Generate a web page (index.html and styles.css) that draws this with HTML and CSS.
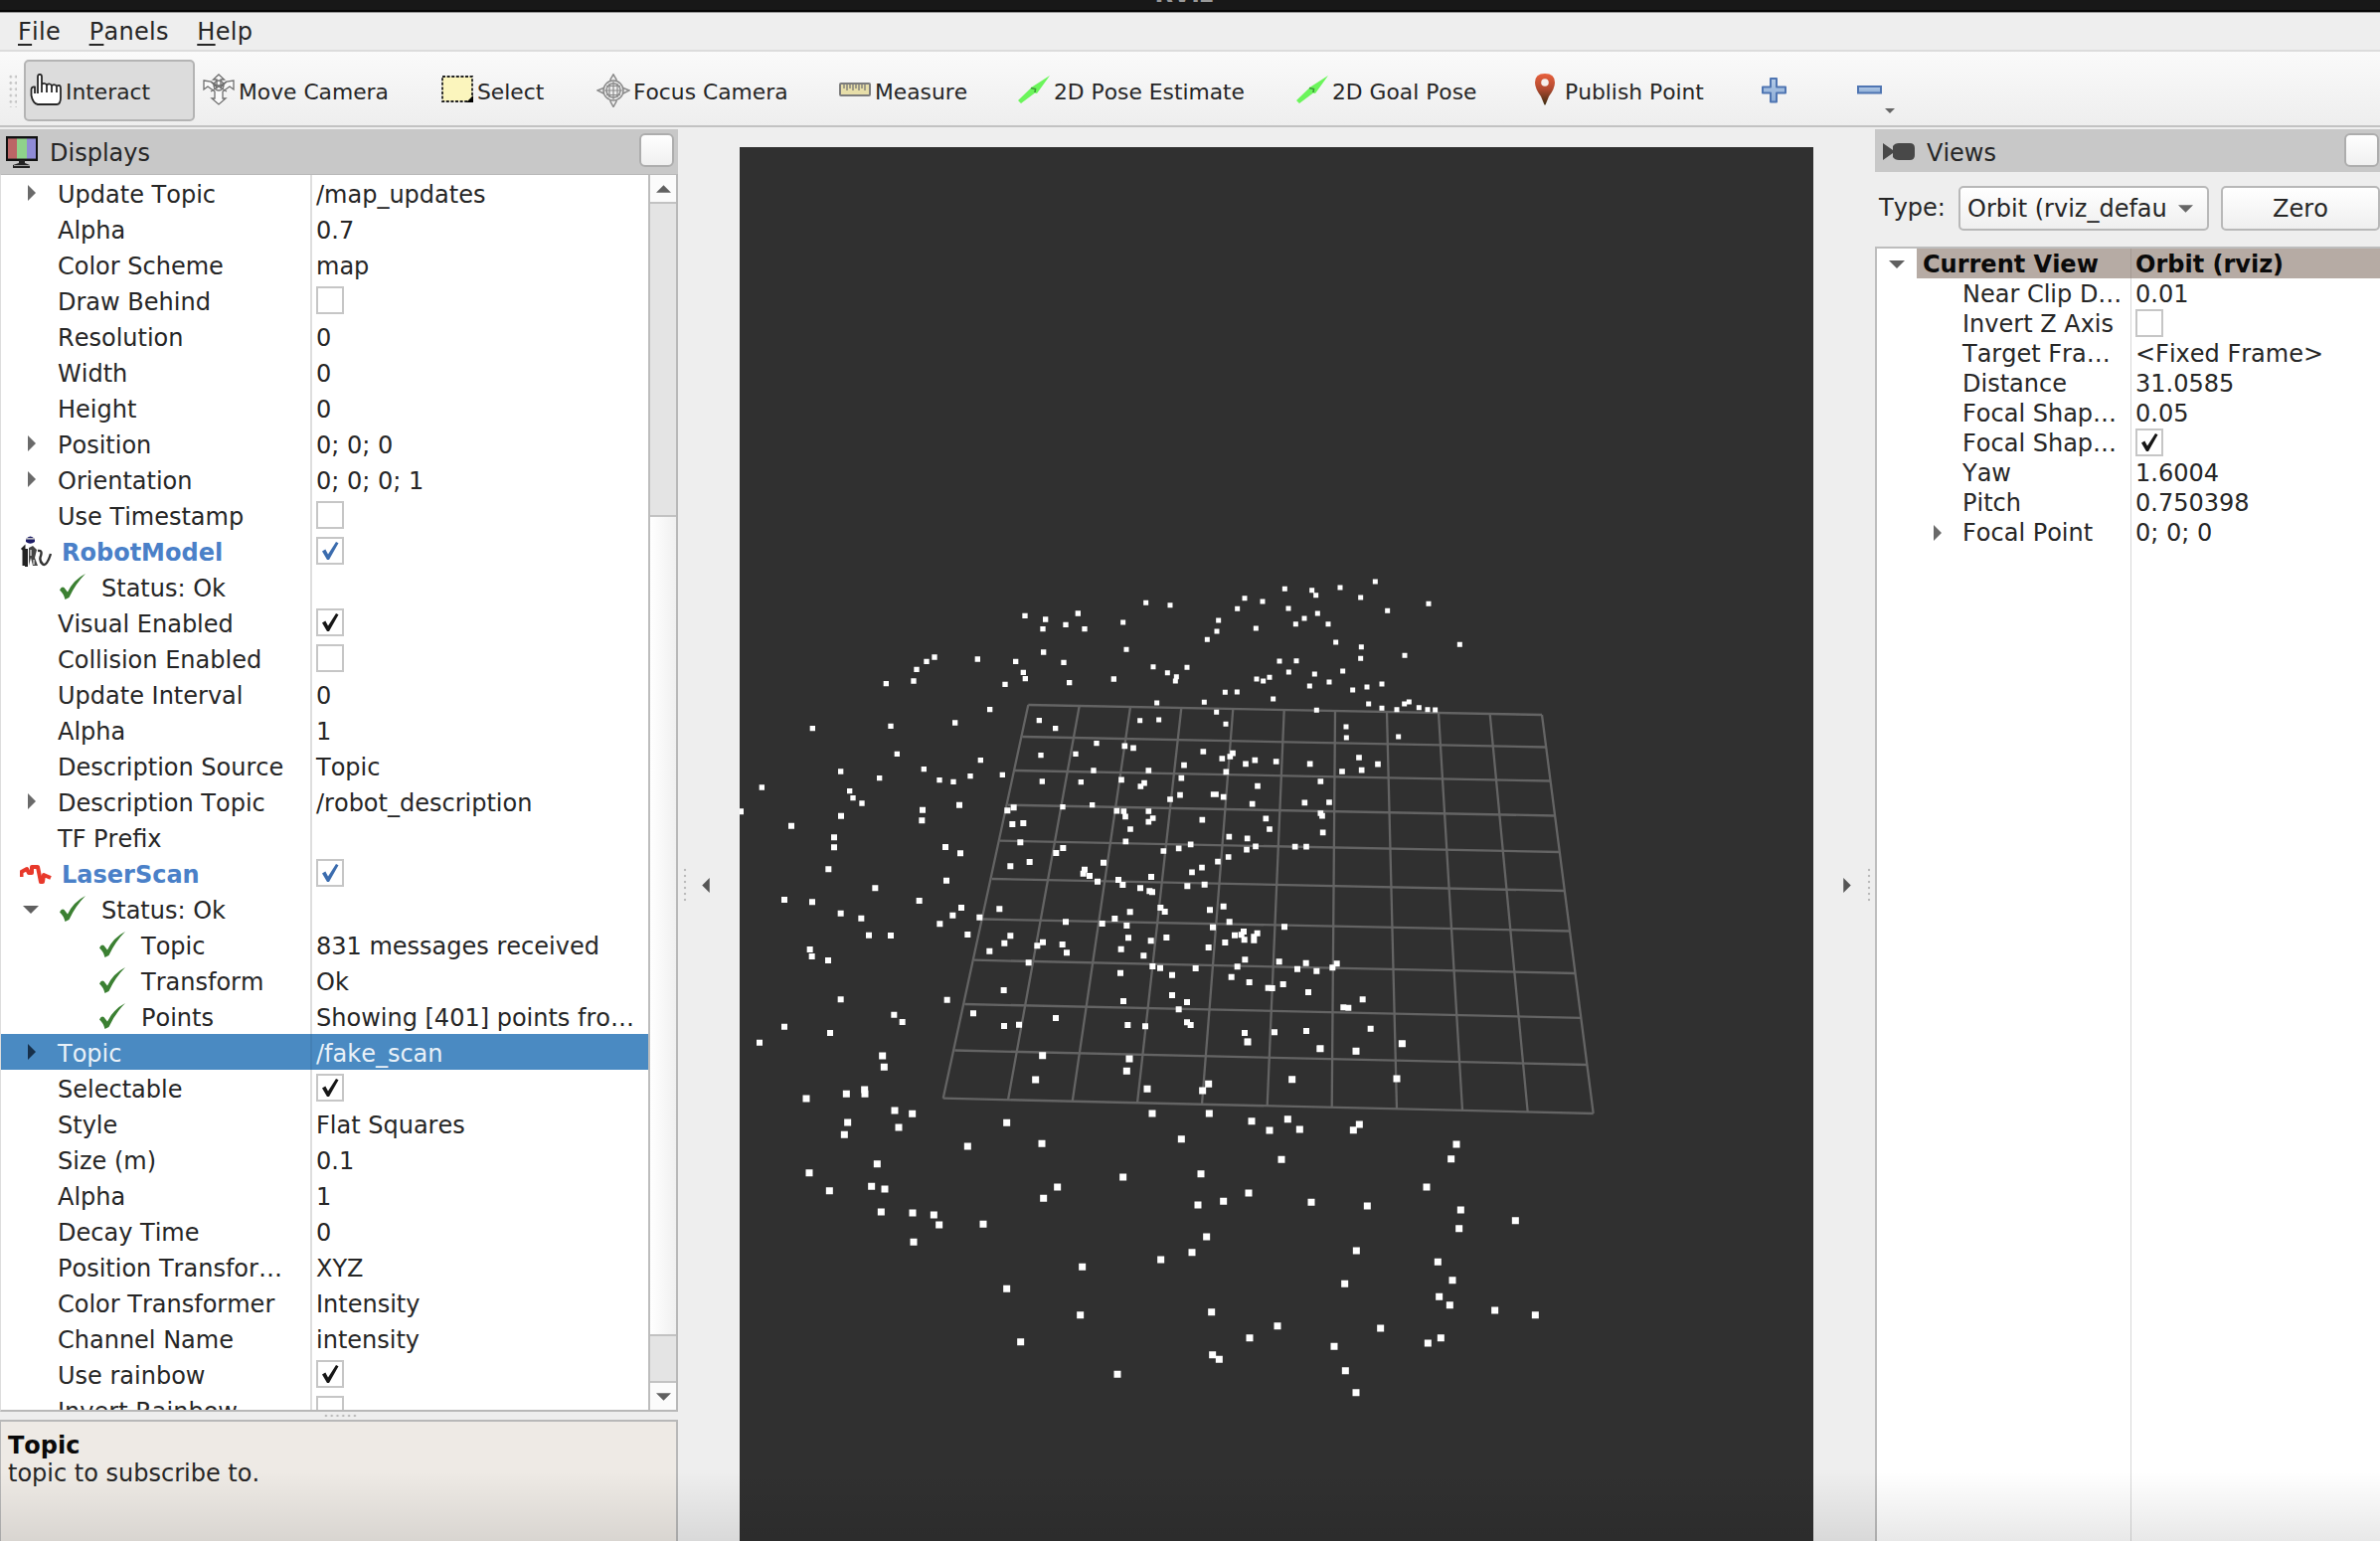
FILE: index.html
```html
<!DOCTYPE html>
<html lang="en">
<head>
<meta charset="utf-8">
<title>RViz</title>
<link rel="stylesheet" href="styles.css">
</head>
<body>
<svg class="defs" aria-hidden="true">
  <defs>
    <linearGradient id="pinFill" x1="0" y1="0" x2="0" y2="1"><stop offset="0" stop-color="#e8603c"/><stop offset=".5" stop-color="#b04a30"/><stop offset="1" stop-color="#3c2c10"/></linearGradient>
    <linearGradient id="blueFill" x1="0" y1="0" x2="0" y2="1"><stop offset="0" stop-color="#b4cbe6"/><stop offset="1" stop-color="#8cacd6"/></linearGradient>
  </defs>
  <symbol id="tri-right" viewBox="0 0 8 16"><path d="M0 0L8 8L0 16z"/></symbol>
  <symbol id="tri-down" viewBox="0 0 16 8"><path d="M0 0H16L8 8z"/></symbol>
  <symbol id="tick" viewBox="0 0 28 28"><path d="M6 14.5L9.3 12.6L12 17.5L20 5L22.5 6.3L13 23H11z"/></symbol>
  <symbol id="ok" viewBox="0 0 26 26"><path d="M0 16.500Q2 12 4.500 14L8 18.500Q14 6 26 0Q16 10 9.500 24L5.500 26Q4 20 0 16.500z"/></symbol>
</svg>
<div class="titlebar"><span>RViz</span></div>
<div class="menubar"><span><u>F</u>ile</span><span><u>P</u>anels</span><span><u>H</u>elp</span></div>
<div class="toolbar">
  <div class="grip"></div>
  <div class="tool tool-interact active">
    <svg class="ico" viewBox="0 0 32 32"><path d="M8 20V3Q8 .8 10 .8T12 3V11Q13 9.500 15 10T17 12Q18 10 20 10.500T22 12.500Q23.500 10.500 25.500 11.500T27 12.500Q31 10.500 31 15V24Q31 31 27 31H8Q3 30 1.500 22V16Q2 13 5 13.500V20M12 11V19M17 12V19M22 12.500V19M27 13V19" fill="#fff" stroke="#262626" stroke-width="1.800" stroke-linejoin="round"/></svg>
    <span>Interact</span></div>
  <div class="tool tool-move">
    <svg class="ico" viewBox="0 0 32 32"><g fill="#fafafa" stroke="#707070" stroke-width="1.300"><path d="M1 7L8 8L14 14V6H10.500L16 1L21.500 6H18V14L24 8L31 7V16L27 13L20 18V25H23L16 31L9 25H12V18L5 13L1 16z"/><circle cx="16" cy="12" r="5" fill="none"/><path d="M8 8L24 18M24 8L8 18M11 12H21" fill="none"/></g></svg>
    <span>Move Camera</span></div>
  <div class="tool tool-select">
    <svg class="ico" viewBox="0 0 32 32"><rect x="1" y="3" width="30" height="25" fill="#fbf5bd" stroke="#222" stroke-width="1.800" stroke-dasharray="3 1.600"/><path d="M32 22V29H25z"/></svg>
    <span>Select</span></div>
  <div class="tool tool-focus">
    <svg class="ico wide" viewBox="0 0 34 34"><g fill="#eee" stroke="#8a8a8a" stroke-width="1.500"><path d="M17 .8L20 6V28L17 33.500L14 28V6z"/><path d="M1 17L7 14.500H27L33 17L27 20H7z"/><circle cx="17" cy="17" r="10"/><circle cx="17" cy="17" r="7" fill="none"/><path d="M8 17H26M17 8V26M10 12.500H24M10 21.500H24M13 10V24M21 10V24" fill="none" stroke-width="1.200"/></g></svg>
    <span>Focus Camera</span></div>
  <div class="tool tool-measure">
    <svg class="ico" viewBox="0 0 32 32"><rect x="1" y="10" width="30" height="12" rx="1" fill="#e7dea9" stroke="#7c7c7c" stroke-width="2"/><path d="M5 11V15M8 11V17M11 11V15M14 11V17M17 11V15M20 11V17M23 11V15M26 11V17" stroke="#777" stroke-width="1.300"/></svg>
    <span>Measure</span></div>
  <div class="tool tool-pose">
    <svg class="ico" viewBox="0 0 32 32"><path d="M0 27L13 14.500L14 13.500L32 2L19 20L17 19.500L3 30z" fill="#6bf55b"/><path d="M13 14.500L17.500 15.500L17 19" fill="none" stroke="#3a9c35" stroke-width="1.600"/></svg>
    <span>2D Pose Estimate</span></div>
  <div class="tool tool-goal">
    <svg class="ico" viewBox="0 0 32 32"><path d="M0 27L13 14.500L14 13.500L32 2L19 20L17 19.500L3 30z" fill="#6bf55b"/><path d="M13 14.500L17.500 15.500L17 19" fill="none" stroke="#3a9c35" stroke-width="1.600"/></svg>
    <span>2D Goal Pose</span></div>
  <div class="tool tool-publish">
    <svg class="ico" viewBox="0 0 32 32"><path d="M16 0Q26 0 26 9Q26 15 20 23L16.500 31.500H15.500L12 23Q6 15 6 9Q6 0 16 0z" fill="url(#pinFill)"/><circle cx="16" cy="9" r="3.800" fill="#f6efec"/></svg>
    <span>Publish Point</span></div>
  <div class="tool tool-add">
    <svg class="ico" viewBox="0 0 32 32"><path d="M13 5H19V13.500H28V19.500H19V28.500H13V19.500H5V13.500H13z" fill="url(#blueFill)" stroke="#4f75b2" stroke-width="2" stroke-linejoin="round"/></svg></div>
  <div class="tool tool-remove">
    <svg class="ico" viewBox="0 0 32 32"><rect x="5" y="13" width="23" height="6.500" fill="url(#blueFill)" stroke="#4f75b2" stroke-width="2"/></svg>
    <svg class="tool-more"><use href="#tri-down"/></svg></div>
</div>

<div class="main">
  <section class="displays">
    <header class="dock-head">
      <svg class="ico" viewBox="0 0 32 32"><rect x="1" y="1" width="30" height="23" fill="#222" stroke="#111" stroke-width="2"/><rect x="2" y="2.500" width="9" height="20" fill="#b66"/><rect x="11" y="2.500" width="10" height="20" fill="#8fd28b"/><rect x="21" y="2.500" width="9" height="20" fill="#8f8bd6"/><path d="M13 24H19V27L24 29V32H7V29L13 27z" fill="#222"/><path d="M8 29.500H24" stroke="#999"/></svg>
      <span>Displays</span><i class="dock-btn"></i>
    </header>
    <div class="tree-wrap">
      <div class="tree">
        <div class="row"><div class="name"><svg class="exp"><use href="#tri-right"/></svg>Update Topic</div><div class="val">/map_updates</div></div>
        <div class="row"><div class="name">Alpha</div><div class="val">0.7</div></div>
        <div class="row"><div class="name">Color Scheme</div><div class="val">map</div></div>
        <div class="row"><div class="name">Draw Behind</div><div class="val"><i class="box"></i></div></div>
        <div class="row"><div class="name">Resolution</div><div class="val">0</div></div>
        <div class="row"><div class="name">Width</div><div class="val">0</div></div>
        <div class="row"><div class="name">Height</div><div class="val">0</div></div>
        <div class="row"><div class="name"><svg class="exp"><use href="#tri-right"/></svg>Position</div><div class="val">0; 0; 0</div></div>
        <div class="row"><div class="name"><svg class="exp"><use href="#tri-right"/></svg>Orientation</div><div class="val">0; 0; 0; 1</div></div>
        <div class="row"><div class="name">Use Timestamp</div><div class="val"><i class="box"></i></div></div>
        <div class="row"><div class="name display-name"><svg class="type-ico" viewBox="0 0 32 32"><path d="M6 3Q10.500 -2 15 3V6Q10.500 9.500 6 6z" fill="#1c1c66"/><path d="M6 2.800H15" stroke="#ccc" stroke-width="1.500"/><path d="M2 14L4 12V30M6.500 13V31" fill="none" stroke="#222" stroke-width="3"/><path d="M9 12L13 10L17 14L15 22L18 30H13L11 22L9 30z" fill="#444"/><path d="M11 14V20M14 24V29" stroke="#ccc" stroke-width="1.500"/><path d="M18 15Q23 14 21 20Q19 25 23 28.500Q27 31 31 18" fill="none" stroke="#333" stroke-width="2.400"/></svg>RobotModel</div><div class="val"><i class="box"><svg class="blue"><use href="#tick"/></svg></i></div></div>
        <div class="row"><div class="name status"><svg class="ok"><use href="#ok"/></svg>Status: Ok</div><div class="val"></div></div>
        <div class="row"><div class="name">Visual Enabled</div><div class="val"><i class="box"><svg><use href="#tick"/></svg></i></div></div>
        <div class="row"><div class="name">Collision Enabled</div><div class="val"><i class="box"></i></div></div>
        <div class="row"><div class="name">Update Interval</div><div class="val">0</div></div>
        <div class="row"><div class="name">Alpha</div><div class="val">1</div></div>
        <div class="row"><div class="name">Description Source</div><div class="val">Topic</div></div>
        <div class="row"><div class="name"><svg class="exp"><use href="#tri-right"/></svg>Description Topic</div><div class="val">/robot_description</div></div>
        <div class="row"><div class="name">TF Prefix</div><div class="val"></div></div>
        <div class="row"><div class="name display-name"><svg class="type-ico" viewBox="0 0 32 32"><path d="M1.500 19V14L7 11L9 15H12V9H18L21 24L23 24L24 17L31 20" fill="none" stroke="#e8392b" stroke-width="4" stroke-linejoin="round"/></svg>LaserScan</div><div class="val"><i class="box"><svg class="blue"><use href="#tick"/></svg></i></div></div>
        <div class="row"><div class="name status"><svg class="exp-open"><use href="#tri-down"/></svg><svg class="ok"><use href="#ok"/></svg>Status: Ok</div><div class="val"></div></div>
        <div class="row"><div class="name status sub"><svg class="ok"><use href="#ok"/></svg>Topic</div><div class="val">831 messages received</div></div>
        <div class="row"><div class="name status sub"><svg class="ok"><use href="#ok"/></svg>Transform</div><div class="val">Ok</div></div>
        <div class="row"><div class="name status sub"><svg class="ok"><use href="#ok"/></svg>Points</div><div class="val">Showing [401] points fro…</div></div>
        <div class="row selected"><div class="name"><svg class="exp"><use href="#tri-right"/></svg>Topic</div><div class="val">/fake_scan</div></div>
        <div class="row"><div class="name">Selectable</div><div class="val"><i class="box"><svg><use href="#tick"/></svg></i></div></div>
        <div class="row"><div class="name">Style</div><div class="val">Flat Squares</div></div>
        <div class="row"><div class="name">Size (m)</div><div class="val">0.1</div></div>
        <div class="row"><div class="name">Alpha</div><div class="val">1</div></div>
        <div class="row"><div class="name">Decay Time</div><div class="val">0</div></div>
        <div class="row"><div class="name">Position Transfor…</div><div class="val">XYZ</div></div>
        <div class="row"><div class="name">Color Transformer</div><div class="val">Intensity</div></div>
        <div class="row"><div class="name">Channel Name</div><div class="val">intensity</div></div>
        <div class="row"><div class="name">Use rainbow</div><div class="val"><i class="box"><svg><use href="#tick"/></svg></i></div></div>
        <div class="row"><div class="name">Invert Rainbow</div><div class="val"><i class="box"></i></div></div>
      </div>
      <div class="scroll">
        <div class="scroll-btn"><svg class="flip"><use href="#tri-down"/></svg></div>
        <div class="groove"></div>
        <div class="thumb"></div>
        <div class="groove-end"></div>
        <div class="scroll-btn"><svg><use href="#tri-down"/></svg></div>
      </div>
    </div>
    <div class="splitter"></div>
    <div class="help"><b>Topic</b><span>topic to subscribe to.</span></div>
  </section>

  <div class="gutter left"><i class="dots"></i><svg class="flip-x"><use href="#tri-right"/></svg></div>

  <div class="viewport">
    <svg viewBox="0 0 1080 1402">
      <g transform="translate(-744 -148)" fill="none" stroke="#646464" stroke-width="2.300">
        <path d="M1034.300 709L1551 719M1028.300 741L1555.100 751.500M1020.700 775L1559.600 785.500M1014 809.700L1564 820.500M1005.700 845.700L1568.800 857M997.700 884L1573.800 896M988.700 924.500L1579 936.500M980 965.700L1584.500 979M970.300 1010L1590.300 1023.800M960.300 1056.500L1596.400 1071M948.700 1104.700L1602.700 1120"/>
        <path d="M1034.300 709L948.700 1104.700M1085.700 710L1014 1106.200M1137 711L1078.700 1107.800M1188.300 712L1144 1109.500M1240.300 713L1209 1111M1291.700 714L1274.700 1112.400M1343 715L1339.700 1113.800M1395 716L1405 1115.300M1447 717L1471 1116.800M1498.700 718L1536.700 1118.500M1551 719L1602.700 1120"/>
      </g>
      <g fill="none" stroke="#fff" stroke-linecap="square">
        <path transform="translate(-14 412) scale(.33333)" stroke-width="16" d="M903 178h0M965 189h0M957 218h0M1026 205h0M1063 171h0M1083 218h0M959 288h0M1020 319h0M1037 380h0M1171 369h0M875 316h0M898 349h0M904 368h0M843 385h0M760 309h0M630 303h0M606 316h0M576 340h0M567 375h0M484 383h0M797 461h0M692 501h0M498 511h0M262 518h0M946 494h0M995 518h0M1119 563h0M951 599h0M1056 595h0M517 595h0M769 614h0M598 641h0M645 674h0M687 679h0M738 662h0M835 658h0M347 648h0M464 668h0M955 678h0M1072 680h0M1110 645h0M1106 749h0M1017 755h0M109 696h0M374 707h0M384 728h0M411 744h0"/>
        <path transform="translate(-14 412) scale(.33333)" stroke-width="18" d="M45 769h0M198 812h0M348 782h0M327 847h0M327 877h0M310 943h0M705 749h0M594 764h0M592 796h0M869 757h0M850 766h0M865 807h0M898 804h0M889 862h0M663 876h0M708 895h0M1018 879h0M997 894h0M859 934h0M917 921h0M1140 923h0M1083 944h0M1079 956h0M1098 963h0M1122 980h0M666 977h0M451 1000h0M584 1038h0M177 1035h0M261 1042h0M347 1076h0M409 1091h0M432 1142h0M498 1143h0M711 1059h0M685 1082h0M646 1108h0M766 1088h0M826 1063h0M730 1140h0M859 1144h0M841 1166h0M796 1190h0M940 1174h0M957 1163h0M1016 1170h0M1029 1195h0M1026 1102h0M1136 1107h0M914 1225h0M254 1185h0M260 1206h0M309 1218h0M347 1336h0M668 1337h0M839 1308h0M508 1382h0M533 1404h0M747 1378h0M840 1416h0M885 1412h0M996 1392h0M177 1418h0M315 1437h0M102 1466h0"/>
        <path transform="translate(376 412) scale(.33333)" stroke-width="15" d="M98 139h0M171 146h0M29 198h0M39 280h0M120 332h0M163 350h0M190 362h0M187 375h0M222 334h0M283 250h0M312 225h0M317 192h0M374 157h0M396 125h0M450 135h0M430 216h0M517 97h0M528 156h0M599 101h0M611 116h0M684 93h0M790 75h0M746 123h0M827 163h0M951 142h0M616 171h0M576 186h0M550 203h0M648 203h0M671 258h0M748 272h0M746 307h0M879 298h0M1045 265h0M501 315h0M552 314h0M529 348h0M607 354h0M692 345h0M651 378h0M592 390h0M432 369h0M452 375h0M471 364h0M482 429h0M337 409h0M373 408h0M274 439h0M131 441h0M722 402h0M765 393h0M810 384h0M770 444h0M810 457h0M855 461h0M878 444h0M892 438h0M922 455h0M948 461h0M971 462h0M613 463h0M311 469h0M339 505h0M80 494h0M137 492h0M702 513h0M703 546h0M860 543h0"/>
        <path transform="translate(376 412) scale(.33333)" stroke-width="17" d="M34 571h0M60 577h0M271 588h0M213 629h0M328 609h0M360 593h0M352 603h0M399 625h0M427 614h0M491 618h0M593 625h0M741 606h0M749 644h0M798 626h0M690 648h0M625 678h0M106 645h0M24 673h0M93 683h0M82 693h0M205 668h0M201 719h0M171 732h0M340 649h0M302 717h0M309 717h0M332 725h0M435 692h0M419 746h0M577 742h0M651 741h0M625 774h0M630 782h0M632 832h0M10 767h0M31 768h0M36 784h0M51 822h0M37 859h0M106 768h0M119 789h0M106 800h0M268 794h0M460 790h0M471 822h0M349 845h0M404 850h0M402 884h0M429 874h0M548 875h0M582 875h0M233 868h0M197 880h0M151 888h0M347 906h0M315 920h0M267 938h0M237 952h0"/>
        <path transform="translate(376 412) scale(.33333)" stroke-width="18" d="M15 975h0M28 990h0M81 1000h0M114 966h0M109 1009h0M117 1012h0M223 994h0M275 989h0M142 1059h0M155 1071h0M50 1072h0M4 1092h0M40 1113h0M45 1150h0M23 1184h0M113 1159h0M160 1149h0M91 1204h0M118 1236h0M141 1241h0M21 1256h0M177 1262h0M248 1242h0M291 1066h0M332 1055h0M350 1102h0M300 1118h0M337 1164h0M287 1179h0M366 1142h0M393 1131h0M386 1141h0M395 1156h0M434 1136h0M424 1147h0M424 1157h0M516 1117h0M397 1216h0M374 1237h0M356 1268h0M410 1284h0M500 1222h0M555 1244h0M581 1226h0M613 1250h0M661 1240h0M674 1228h0M467 1301h0M479 1302h0M512 1290h0M588 1314h0M752 1336h0M694 1360h0M709 1361h0M776 1424h0M871 1470h0M732 1492h0M623 1485h0M582 1431h0M486 1435h0M396 1437h0M405 1463h0M177 1323h0M222 1344h0M197 1366h0M222 1405h0M233 1413h0M30 1341h0M43 1413h0M96 1417h0"/>
        <path transform="translate(-14 892) scale(.33333)" stroke-width="21" d="M473 66h0M478 100h0M419 168h0M420 181h0M364 181h0M243 195h0M368 267h0M358 304h0M510 231h0M563 241h0M522 282h0M457 392h0M252 419h0M313 473h0M440 460h0M480 468h0M469 537h0M564 540h0M628 546h0M644 576h0M567 628h0M777 574h0M730 339h0M848 268h0M954 331h0M935 138h0M956 65h0M1218 75h0M1210 112h0M1199 432h0M1001 462h0M959 496h0M1076 703h0M848 769h0M1070 848h0M890 929h0M1182 1027h0"/>
        <path transform="translate(396 892) scale(.33333)" stroke-width="21" d="M345 24h0M564 44h0M672 52h0M811 29h0M479 137h0M795 135h0M227 151h0M209 171h0M42 166h0M57 240h0M229 240h0M145 317h0M357 263h0M411 291h0M466 257h0M502 288h0M664 290h0M682 273h0M447 379h0M204 422h0M348 480h0M272 505h0M195 516h0M537 508h0M706 519h0M221 612h0M177 659h0M83 681h0M673 654h0M638 754h0M975 333h0M959 377h0M885 462h0M988 531h0M983 587h0M1153 563h0M919 688h0M963 743h0M923 793h0M955 818h0M1091 834h0M1213 848h0M928 917h0M889 933h0M746 888h0M606 943h0M640 1016h0M672 1082h0M435 881h0M351 917h0M236 839h0M239 968h0M259 982h0"/>
      </g>
    </svg>
  </div>

  <div class="gutter right"><svg><use href="#tri-right"/></svg><i class="dots"></i></div>

  <section class="views">
    <header class="dock-head">
      <svg class="ico" viewBox="0 0 32 32"><path d="M0 8L10 15V11Q12 8 16 8H27Q32 8 32 13V20Q32 25 27 25H16Q12 25 10 22V18L0 25z" fill="#484848"/></svg>
      <span>Views</span><i class="dock-btn"></i>
    </header>
    <div class="type-row"><label>Type:</label><div class="combo"><span>Orbit (rviz_defau</span><svg><use href="#tri-down"/></svg></div><div class="zero">Zero</div></div>
    <div class="vtree">
      <div class="vrow current"><div class="name"><svg class="exp-open"><use href="#tri-down"/></svg><b>Current View</b></div><div class="val">Orbit (rviz)</div></div>
      <div class="vrow"><div class="name">Near Clip D…</div><div class="val">0.01</div></div>
      <div class="vrow"><div class="name">Invert Z Axis</div><div class="val"><i class="box"></i></div></div>
      <div class="vrow"><div class="name">Target Fra…</div><div class="val">&lt;Fixed Frame&gt;</div></div>
      <div class="vrow"><div class="name">Distance</div><div class="val">31.0585</div></div>
      <div class="vrow"><div class="name">Focal Shap…</div><div class="val">0.05</div></div>
      <div class="vrow"><div class="name">Focal Shap…</div><div class="val"><i class="box"><svg><use href="#tick"/></svg></i></div></div>
      <div class="vrow"><div class="name">Yaw</div><div class="val">1.6004</div></div>
      <div class="vrow"><div class="name">Pitch</div><div class="val">0.750398</div></div>
      <div class="vrow"><div class="name"><svg class="exp"><use href="#tri-right"/></svg>Focal Point</div><div class="val">0; 0; 0</div></div>
      <div class="vrow filler"><div class="name"></div><div class="val"></div></div>
    </div>
  </section>
</div>
<div class="edge-shade"></div>
</body>
</html>
```
FILE: styles.css
```css
* { box-sizing: border-box; }
body {
  margin: 0;
  width: 2394px;
  height: 1550px;
  overflow: hidden;
  display: flex;
  flex-direction: column;
  background: #eee;
  color: #262626;
  font: 24px/28px "DejaVu Sans", sans-serif;
  font-kerning: none;
  white-space: nowrap;
}
svg { display: block; flex: none; }
.defs { position: absolute; width: 0; height: 0; }
i { font-style: normal; }

.titlebar {
  height: 12px;
  flex: none;
  overflow: hidden;
  background: #181818;
  border-bottom: 2px solid #050505;
  color: #999;
  text-align: center;
  font-weight: bold;
}
.titlebar span { display: block; margin-top: -20px; padding-right: 12px; }

.menubar {
  height: 40px;
  flex: none;
  display: flex;
  gap: 28.5px;
  padding: 5px 0 0 18px;
  border-top: 1px solid #999;
  border-bottom: 2px solid #dcdcdc;
  letter-spacing: .3px;
}
.menubar u { text-decoration-thickness: 2px; text-underline-offset: 4px; }

.toolbar {
  height: 76px;
  flex: none;
  display: flex;
  align-items: flex-start;
  padding-top: 8px;
  background: linear-gradient(#fafafa, #eee);
  border-bottom: 2px solid #c2c2c2;
  font-size: 21.8px;
}
.grip {
  width: 9px;
  height: 34px;
  margin: 14px 7px 0 8px;
  background: radial-gradient(circle, #c4c4c4 1.2px, transparent 1.6px) 0 0 / 5.500px 6.300px;
}
.tool {
  height: 62px;
  display: flex;
  align-items: flex-start;
  gap: 4px;
  padding: 13px 0 0 5px;
  border: 1px solid transparent;
  flex: none;
}
.tool span { padding-top: 5px; }
.tool.active {
  background: #dcdcdc;
  border: 2px solid #b4b4b4;
  border-radius: 5px;
  padding: 12px 0 0 4px;
}
.ico { width: 32px; height: 32px; }
.ico.wide { width: 34px; height: 34px; }
.tool-interact { width: 172px; margin-right: 2px; }
.tool-move { width: 240px; }
.tool-select { width: 156px; }
.tool-focus { width: 244px; gap: 3px; }
.tool-measure { width: 180px; }
.tool-pose { width: 280px; }
.tool-goal { width: 234px; }
.tool-publish { width: 230px; }
.tool-add { width: 96px; }
.tool-remove { width: 60px; gap: 0; }
.tool-more { width: 10px; height: 7px; margin-top: 34px; fill: #666; }

.main { flex: 1; min-height: 0; display: flex; }
.displays { width: 682px; flex: none; display: flex; flex-direction: column; padding-top: 2px; }
.dock-head {
  height: 45px;
  flex: none;
  display: flex;
  align-items: center;
  padding: 0 4px 0 6px;
  background: #c8c8c8;
}
.dock-head span { margin-left: 12px; flex: 1; padding-top: 3px; }
.dock-btn {
  width: 35px;
  height: 34px;
  margin-bottom: 4px;
  border: 2px solid #adadad;
  border-radius: 6px;
  background: linear-gradient(#fff, #f0f0f0);
}
.tree-wrap {
  height: 1245px;
  flex: none;
  display: flex;
  border: 1px solid #b8b8b8;
  border-left-color: #ddd;
  border-right-width: 2px;
  border-bottom-width: 2px;
}
.tree { flex: 1; overflow: hidden; background: #fff; }
.row { height: 36px; display: flex; }
.name, .val { display: flex; align-items: center; position: relative; }
.row .name { width: 313px; flex: none; padding: 4px 0 0 57px; border-right: 2px solid #dedede; }
.row .val { flex: 1; padding: 4px 0 0 4px; }
.row .box { margin-top: -4px; }
.exp { width: 8px; height: 16px; fill: #6a6a6a; margin: -4px 22px 0 -30px; }
.exp-open { width: 16px; height: 8px; fill: #606060; }
.row .exp-open { margin: -2px 21px 0 -37px; }
.row .display-name { padding-left: 61px; font-weight: bold; color: #4a80c8; }
.type-ico { width: 32px; height: 32px; margin: -2px 10px 0 -42px; }
.row .status { padding-left: 59px; }
.row .status.sub { padding-left: 99px; }
.ok { width: 26px; height: 26px; margin: -5px 16px 0 0; fill: #3b8032; }
.selected { background: #4a8ac2; color: #e9f1f8; }
.selected .exp { fill: #17304a; }
.row.selected .name { border-color: #4480b5; }
.box {
  width: 28px;
  height: 28px;
  border: 2px solid #c6c6c6;
  background: #fff;
  display: block;
  flex: none;
}
.box svg { width: 28px; height: 28px; margin: -2px; fill: #161616; }
.box svg.blue { fill: #3b6cae; }

.scroll { width: 28px; display: flex; flex-direction: column; border-left: 2px solid #bdbdbd; background: #fff; }
.scroll-btn { height: 27px; display: flex; align-items: center; justify-content: center; background: #fbfbfb; }
.scroll-btn svg { width: 15px; height: 8px; fill: #606060; }
.flip { transform: rotate(180deg); }
.flip-x { transform: scaleX(-1); }
.groove { height: 317px; background: #e4e4e4; border: solid #c2c2c2; border-width: 2px 0; }
.thumb { flex: 1; background: linear-gradient(90deg, #fff, #f0f0f0); }
.groove-end { height: 49px; background: #e4e4e4; border: solid #c2c2c2; border-width: 2px 0; }
.splitter {
  height: 8px;
  flex: none;
  width: 34px;
  margin-left: 325px;
  background: radial-gradient(circle, #bbb 1.2px, transparent 1.6px) 0 1px / 5.800px 6px repeat-x;
}
.help {
  flex: 1;
  display: flex;
  flex-direction: column;
  padding: 10px 7px;
  background: #eeeae5;
  border: 2px solid #b8b8b8;
  border-width: 2px 2px 0 1px;
}
.help b { color: #0a0a0a; }

.gutter { width: 62px; flex: none; display: flex; align-items: flex-start; padding-top: 755px; }
.gutter svg { width: 8px; height: 15px; fill: #555; }
.gutter.left { gap: 14px; padding-left: 4px; }
.gutter.right { gap: 15px; padding-left: 30px; }
.dots { width: 6px; height: 36px; margin-top: -11px; background: radial-gradient(circle, #bbb 1.2px, transparent 1.6px) 0 0 / 6px 6px repeat-y; }

.viewport { width: 1080px; flex: none; margin-top: 20px; background: #303030; }
.viewport svg { width: 1080px; height: 1402px; }

.views { flex: 1; display: flex; flex-direction: column; padding-top: 2px; overflow: hidden; }
.views .dock-head { height: 43px; padding: 0 1px 0 8px; }
.views .dock-head span { margin-left: 12px; padding-top: 4px; }
.views .dock-btn { margin-bottom: 2px; }
.type-row { height: 75px; flex: none; display: flex; align-items: flex-start; padding: 14px 0 0 4px; }
.type-row label { width: 80px; padding-top: 8px; }
.combo, .zero {
  height: 45px;
  border: 2px solid #b8b8b8;
  border-radius: 5px;
  background: linear-gradient(#fff, #efefef);
}
.combo { width: 252px; margin-right: 12px; padding: 0 14px 0 7px; display: flex; align-items: center; justify-content: space-between; }
.combo svg { width: 15px; height: 8px; fill: #666; }
.zero { width: 160px; line-height: 43px; text-align: center; }
.vtree { flex: 1; display: flex; flex-direction: column; background: #fff; border: 2px solid #bdbdbd; border-width: 2px 0 0 2px; }
.vrow { height: 30px; flex: none; display: flex; }
.vrow .name { width: 256px; flex: none; padding: 1px 0 0 86px; border-right: 1px solid #d8d8d8; }
.vrow .val { flex: 1; padding: 1px 0 0 4px; }
.vrow .box { margin-top: -1px; }
.vrow .exp { margin: 0 21px 0 -29px; }
.vrow.filler { flex: 1; height: auto; }
.vrow.current { background: linear-gradient(90deg, #fff 40px, #b6aba4 40px); color: #0a0a0a; font-weight: bold; }
.vrow.current .name { padding-left: 12px; border-color: #a69b94; }
.vrow.current .exp-open { margin-right: 18px; }

/* soft shadow along the lower window edge */
.edge-shade {
  position: absolute;
  left: 0;
  top: 1480px;
  width: 2394px;
  height: 70px;
  background: linear-gradient(transparent, rgba(0, 0, 0, .09));
}
```
